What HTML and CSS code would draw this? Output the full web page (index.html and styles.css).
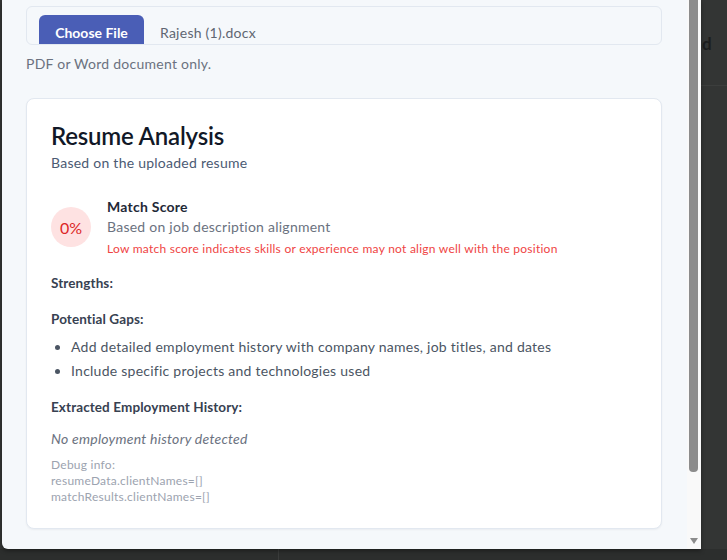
FILE: index.html
```html
<!DOCTYPE html>
<html lang="en">
<head>
<meta charset="utf-8">
<title>Resume Analysis</title>
<link rel="stylesheet" href="styles.css">
</head>
<body>
<div class="backdrop">
  <div class="bg-line"></div>
  <div class="bg-text">d</div>
  <div class="bg-bottom"><div class="bg-divider"></div></div>
  <div class="modal">
    <div class="modal-body">
      <div class="file-box">
        <span class="file-btn">Choose File</span>
        <span class="file-name">Rajesh (1).docx</span>
      </div>
      <p class="hint">PDF or Word document only.</p>

      <section class="card">
        <h2 class="card-title">Resume Analysis</h2>
        <p class="card-sub">Based on the uploaded resume</p>

        <div class="score-row">
          <div class="score-circle">0%</div>
          <div class="score-text">
            <div class="score-label">Match Score</div>
            <div class="score-desc">Based on job description alignment</div>
            <div class="score-warn">Low match score indicates skills or experience may not align well with the position</div>
          </div>
        </div>

        <div class="section">
          <h3 class="section-title">Strengths:</h3>
        </div>

        <div class="section">
          <h3 class="section-title">Potential Gaps:</h3>
          <ul class="gap-list">
            <li>Add detailed employment history with company names, job titles, and dates</li>
            <li>Include specific projects and technologies used</li>
          </ul>
        </div>

        <div class="section">
          <h3 class="section-title">Extracted Employment History:</h3>
          <p class="empty">No employment history detected</p>
          <div class="debug">
            <div>Debug info:</div>
            <div>resumeData.clientNames=[]</div>
            <div>matchResults.clientNames=[]</div>
          </div>
        </div>
      </section>
    </div>
    <div class="scrollbar">
      <div class="thumb"></div>
      <div class="arrow"></div>
    </div>
  </div>
</div>
</body>
</html>
```

FILE: styles.css
```css
* { box-sizing: border-box; }
html, body { margin: 0; padding: 0; }
body {
  width: 727px;
  height: 560px;
  overflow: hidden;
  background: #333534;
  font-family: "Lato", "Noto Sans", sans-serif;
  letter-spacing: 0.25px;
}
.backdrop {
  position: relative;
  width: 727px;
  height: 560px;
}
.bg-line {
  position: absolute;
  left: 700px;
  top: 85px;
  width: 27px;
  height: 1px;
  background: #3c3e3d;
}
.bg-text {
  position: absolute;
  left: 702px;
  top: 33px;
  font-size: 17px;
  font-weight: 700;
  color: #1c1d1d;
}
.bg-bottom {
  position: absolute;
  left: 0;
  top: 549px;
  width: 727px;
  height: 11px;
  background: #2c2e2d;
}
.bg-divider {
  position: absolute;
  left: 278px;
  top: 0;
  width: 1px;
  height: 11px;
  background: #3a3c3b;
}
.modal {
  position: absolute;
  left: 2px;
  top: 0;
  width: 699px;
  height: 549px;
  display: flex;
  background: #f5f8fb;
  border-bottom-left-radius: 6px;
  box-shadow: 0 2px 4px rgba(0,0,0,0.35);
  overflow: hidden;
}
.modal-body {
  flex: 1;
  padding: 6px 25px 0 24px;
}
.file-box {
  height: 39px;
  border: 1px solid #e2e8f0;
  border-radius: 6px;
  overflow: hidden;
  display: flex;
  align-items: flex-start;
  padding: 8px 0 0 12px;
  gap: 16px;
}
.file-btn {
  display: block;
  width: 105px;
  height: 40px;
  padding-top: 8px;
  background: #4a5eb6;
  color: #ffffff;
  border-radius: 6px 6px 0 0;
  text-align: center;
  font-size: 14px;
  font-weight: 700;
  line-height: 20px;
  letter-spacing: 0;
}
.file-name {
  padding-top: 8px;
  font-size: 14px;
  line-height: 20px;
  color: #5f6672;
}
.hint {
  margin: 9px 0 0;
  font-size: 14px;
  line-height: 20px;
  color: #6b7280;
}
.card {
  margin-top: 24px;
  background: #ffffff;
  border: 1px solid #e2e8f0;
  border-radius: 8px;
  box-shadow: 0 1px 2px rgba(15,23,42,0.05);
  padding: 22px 24px 23px;
}
.card-title {
  margin: 0;
  font-size: 24px;
  line-height: 30px;
  font-weight: 600;
  color: #111827;
  letter-spacing: -0.2px;
}
.card-sub {
  margin: 2px 0 0;
  font-size: 14px;
  line-height: 20px;
  color: #4b5a73;
}
.score-row {
  margin-top: 24px;
  display: flex;
  align-items: center;
  gap: 16px;
}
.score-circle {
  width: 40px;
  height: 40px;
  border-radius: 50%;
  background: #fee2e2;
  color: #dc2626;
  font-size: 16px;
  display: flex;
  align-items: center;
  justify-content: center;
  flex: none;
  letter-spacing: 0;
}
.score-label {
  font-size: 14px;
  line-height: 20px;
  font-weight: 700;
  color: #1f2937;
}
.score-desc {
  font-size: 14px;
  line-height: 20px;
  color: #6b7280;
}
.score-warn {
  margin-top: 4px;
  font-size: 12px;
  line-height: 16px;
  color: #ef4444;
}
.section { margin-top: 16px; }
.section-title {
  margin: 0;
  font-size: 13.5px;
  line-height: 20px;
  font-weight: 700;
  color: #374151;
  letter-spacing: 0.1px;
}
.gap-list {
  margin: 8px 0 0;
  padding-left: 20px;
  display: flex;
  flex-direction: column;
  gap: 4px;
}
.gap-list li {
  font-size: 14px;
  line-height: 20px;
  color: #4b5563;
}
.empty {
  margin: 12px 0 0;
  font-size: 14px;
  line-height: 20px;
  font-style: italic;
  color: #6b7280;
}
.debug {
  margin-top: 8px;
  font-size: 12px;
  line-height: 16px;
  color: #9ca3af;
}
.scrollbar {
  position: relative;
  width: 14px;
  flex: none;
  background: #f9f9f9;
}
.thumb {
  position: absolute;
  left: 2px;
  top: 0;
  width: 9px;
  height: 472px;
  background: #8c8c8c;
  border-radius: 0 0 4px 4px;
}
.arrow {
  position: absolute;
  left: 3px;
  top: 538px;
  width: 0;
  height: 0;
  border-left: 4px solid transparent;
  border-right: 4px solid transparent;
  border-top: 6px solid #8c8c8c;
}
```
